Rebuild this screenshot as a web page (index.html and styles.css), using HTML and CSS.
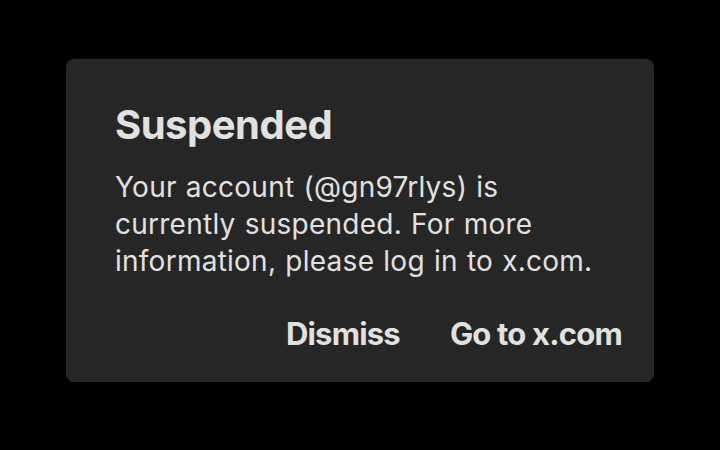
FILE: index.html
```html
<!DOCTYPE html>
<html>
<head>
<meta charset="utf-8">
<link rel="stylesheet" href="styles.css">
</head>
<body>
<div class="screen">
  <div class="dialog">
    <h1 class="title">Suspended</h1>
    <p class="message">Your account (@gn97rlys) is currently suspended. For more information, please log in to x.com.</p>
    <div class="actions">
      <span class="action">Dismiss</span>
      <span class="action">Go to x.com</span>
    </div>
  </div>
</div>
</body>
</html>
```

FILE: styles.css
```css
html, body {
  margin: 0;
  padding: 0;
  background: #000;
  width: 720px;
  height: 450px;
  overflow: hidden;
}
.screen {
  width: 720px;
  height: 450px;
  display: flex;
  align-items: flex-start;
  justify-content: flex-start;
  padding: 59px 0 0 66px;
  box-sizing: border-box;
}
.dialog {
  width: 588px;
  height: 323px;
  box-sizing: border-box;
  background: #262626;
  border-radius: 8px;
  padding: 40px 32px 0 49px;
  font-family: Inter, "Noto Sans", sans-serif;
  color: #e1e1e1;
  display: flex;
  flex-direction: column;
}
.title {
  margin: 0;
  font-size: 40px;
  font-weight: 700;
  line-height: 52px;
  letter-spacing: -0.5px;
}
.message {
  margin: 18px 0 0 0;
  font-size: 28px;
  line-height: 37px;
  font-weight: 400;
  letter-spacing: 0.25px;
  word-spacing: 1px;
  width: 500px;
}
.actions {
  margin-top: 34px;
  display: flex;
  justify-content: flex-end;
  gap: 50px;
}
.action {
  font-size: 31px;
  font-weight: 700;
  letter-spacing: -0.8px;
  line-height: 40px;
}
```
